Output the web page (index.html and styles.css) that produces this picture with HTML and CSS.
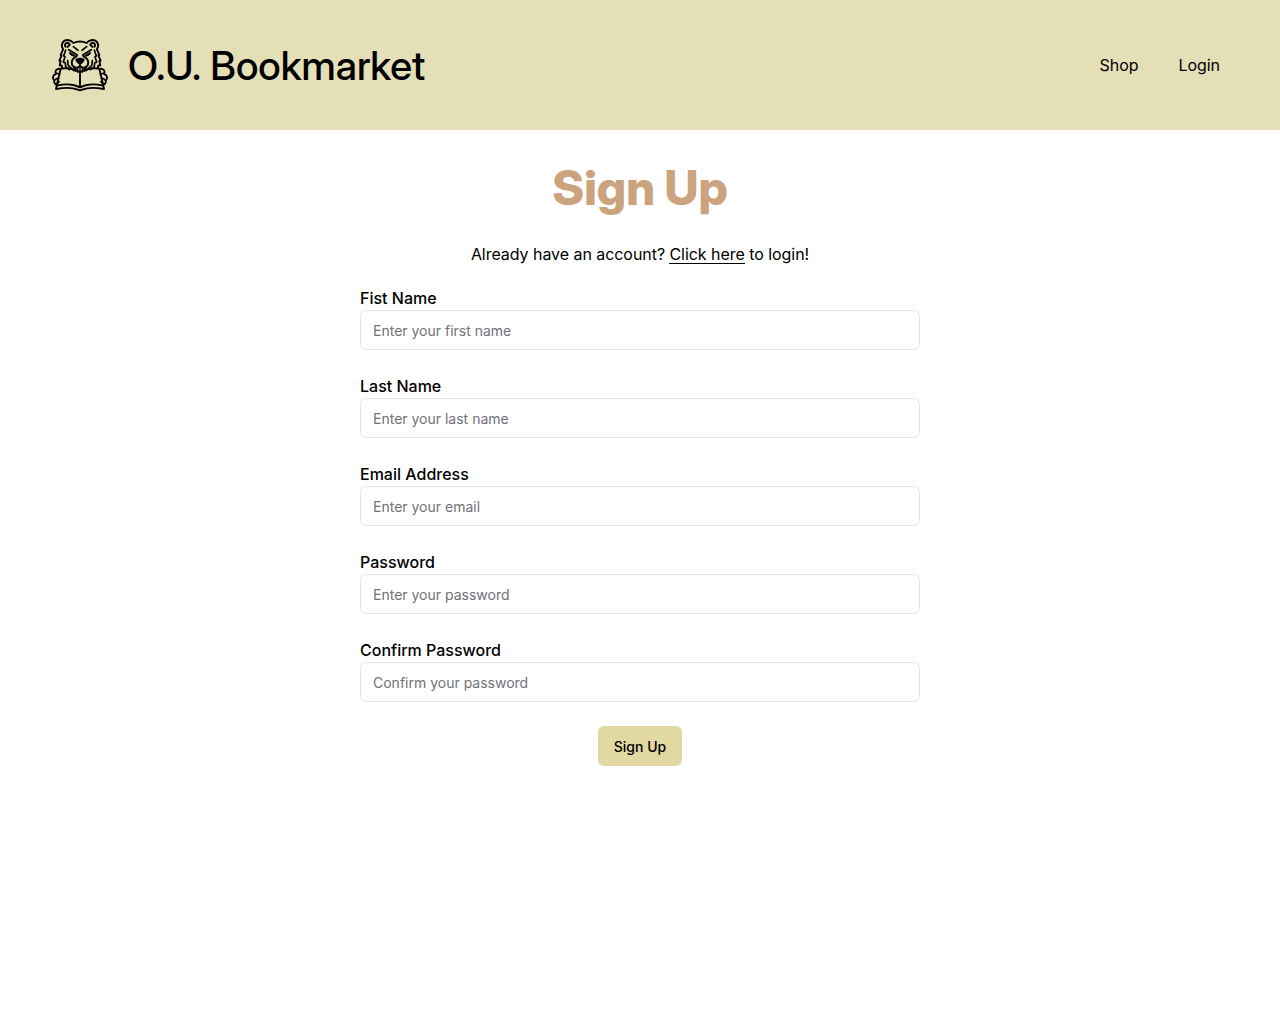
FILE: index.html
```html
<!DOCTYPE html>
<html lang="en"><head><meta charset="utf-8"><title>O.U. Bookmarket</title><link rel="stylesheet" href="styles.css"></head>
<body>
<header class="header">
<a class="brand"><svg class="logo" viewBox="0 0 192 186" fill="none" stroke="#000" stroke-width="5.6" stroke-linecap="round" stroke-linejoin="round">
<!-- ears and crown -->
<path d="M45 46C36 31 46 18 59 18Q70 19 76 27Q96 18 116 27Q122 19 133 18C146 18 156 31 147 46"/>
<path d="M52 38C48 27 60 23 66 32L58 39M140 38C144 27 132 23 126 32L134 39"/>
<!-- fur -->
<path d="M45 46L38 63L41 64L34 80L38 80L35 94L41 94L43 103M147 46L154 63L151 64L158 80L154 80L157 94L151 94L149 103"/>
<path d="M53 48L47 66L51 68L46 85L52 87L53 98L65 107M139 48L145 66L141 68L146 85L140 87L139 98L127 107M59 80L60 93L76 109M133 80L132 93L116 109" stroke-width="5"/>
<!-- brows and eyes -->
<path d="M62 47L88 63M130 47L104 63M76 38L90 49M116 38L102 49" stroke-width="5"/>
<path d="M64 56Q68 68 83 66L67 56M128 56Q124 68 109 66L125 56" fill="#000" stroke-width="3"/>
<!-- muzzle -->
<path d="M86 67C74 71 69 82 72 92Q76 102 87 101Q93 100 96 95Q99 100 105 101Q116 102 120 92C123 82 118 71 106 67"/>
<path d="M85 77Q96 71 107 77Q106 84 96 89Q86 84 85 77Z" fill="#000"/>
<path d="M96 88V95M79 101L82 112M113 101L110 112M88 102L89 114M104 102L103 114M96 103V112" stroke-width="4.5"/>
<!-- open book -->
<path d="M38 104Q70 99 96 115Q122 99 154 104L166 155Q124 145 96 160Q68 145 26 155Z"/>
<path d="M96 115V160M26 155L24 165Q67 157 89 167Q96 171 103 167Q125 157 168 165L166 155"/>
<!-- paws -->
<path d="M38 105C26 102 19 111 24 120C14 122 12 134 19 140C16 147 23 153 28 149M154 105C166 102 173 111 168 120C178 122 180 134 173 140C176 147 169 153 164 149"/>
<path d="M25 118L35 120M20 139Q24 133 32 133M167 118L157 120M172 139Q168 133 160 133M27 149L34 143M165 149L158 143" stroke-width="4.5"/>
</svg><span class="title">O.U. Bookmarket</span></a>
<nav class="nav"><a>Shop</a><a>Login</a></nav>
</header>
<main class="main">
<h1 class="heading">Sign Up</h1>
<p class="hint">Already have an account? <a class="link">Click here</a> to login!</p>
<form class="form">
<label class="field">Fist Name<input class="input" placeholder="Enter your first name"></label>
<label class="field">Last Name<input class="input" placeholder="Enter your last name"></label>
<label class="field">Email Address<input class="input" placeholder="Enter your email"></label>
<label class="field">Password<input class="input" type="password" placeholder="Enter your password"></label>
<label class="field">Confirm Password<input class="input" type="password" placeholder="Confirm your password"></label>
<button class="button" type="button">Sign Up</button>
</form>
</main>
</body></html>
```
FILE: styles.css
```css
* { box-sizing: border-box; }
body { margin: 0; background: #fff; color: #000; font: 16px/24px Inter, sans-serif; }
.header { height: 130px; padding: 0 60px 0 48px; background: #e4dfb7; display: flex; align-items: center; justify-content: space-between; }
.brand { display: flex; align-items: center; gap: 16px; }
.logo { width: 64px; height: 62px; }
.title { padding-top: 2px; font-family: "Inter Display", Inter, sans-serif; font-variation-settings: "opsz" 32; font-size: 40px; font-weight: 500; line-height: 60px; }
.nav { display: flex; gap: 40px; letter-spacing: -0.05px; }
.main { padding-top: 34px; display: flex; flex-direction: column; align-items: center; }
.heading { margin: 0; font-family: "Inter Display", Inter, sans-serif; font-variation-settings: "opsz" 32; font-size: 48px; line-height: 48px; font-weight: 800; color: #cba37f; }
.hint { margin: 30px 0 20px; letter-spacing: -0.05px; }
.link { display: inline-block; height: 22px; line-height: 24px; border-bottom: 1px solid #000; }
.form { width: 560px; display: flex; flex-direction: column; gap: 24px; }
.field { display: flex; flex-direction: column; font-weight: 500; }
.input { height: 40px; padding: 8px 12px; border: 1px solid #e4e4e7; border-radius: 6px; background: #fff; font: 14px/20px Inter, sans-serif; }
.input::placeholder { color: #71717a; }
.button { align-self: center; height: 40px; padding: 10px 16px 8px; border: 0; border-radius: 6px; background: #e2d8a2; color: #000; font: 500 14px/20px Inter, sans-serif; }
```
